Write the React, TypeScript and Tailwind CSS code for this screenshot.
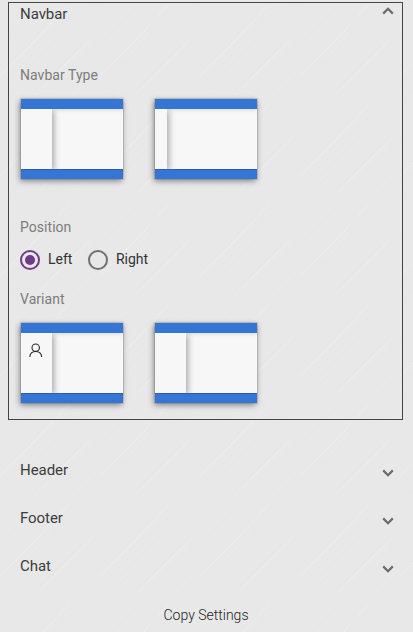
import React from "react";

const STREAKS = [
  { d: "M-7 83L32 43L70 3L32.5 44Z", color: "#f3f3f3", w: 0.5, o: 0.45 },
  { d: "M12 62L58 15", color: "#dddddd", w: 0.6, o: 0.35 },
  { d: "M33 97L64 65L95 35L64.5 66Z", color: "#f3f3f3", w: 0.5, o: 0.35 },
  { d: "M37 89L82 45", color: "#dedede", w: 0.6, o: 0.4 },
  { d: "M3 84L76 10", color: "#dedede", w: 0.6, o: 0.35 },
  { d: "M17 79L61 35", color: "#e1e1e1", w: 0.6, o: 0.6 },
  { d: "M52 94L96 50", color: "#dfdfdf", w: 0.6, o: 0.45 },
  { d: "M2 42L36 8", color: "#dfdfdf", w: 0.6, o: 0.4 },
  { d: "M70 32L98 3", color: "#e0e0e0", w: 0.6, o: 0.5 },
  { d: "M71 97L96 72", color: "#f0f0f0", w: 0.7, o: 0.3 },
  { d: "M5 98L30 74", color: "#e1e1e1", w: 0.6, o: 0.6 },
  { d: "M24 60L50 33", color: "#efefef", w: 0.7, o: 0.3 },
];

function Texture() {
  return (
    <svg className="absolute inset-0 -z-10 h-full w-full" aria-hidden="true">
      <defs>
        <pattern id="streaks" width="100" height="100" patternUnits="userSpaceOnUse">
          <rect width="100" height="100" fill="#e8e8e8" />
          {STREAKS.map((s) => (
            <path key={s.d} d={s.d} fill={s.color} stroke={s.color} strokeWidth={s.w} opacity={s.o} />
          ))}
        </pattern>
      </defs>
      <rect width="100%" height="100%" fill="url(#streaks)" />
    </svg>
  );
}

function Chevron({ up = false }: { up?: boolean }) {
  return (
    <svg width="12" height="8" viewBox="0 0 12 8" fill="none" stroke="#6c6c6c" strokeWidth="2.3">
      <path d={up ? "M1.2 6.6L6 1.8L10.8 6.6" : "M1.2 1.4L6 6.2L10.8 1.4"} />
    </svg>
  );
}

function LayoutCard({ mini = false, user = false }: { mini?: boolean; user?: boolean }) {
  return (
    <button className="flex h-20 w-[102px] flex-col bg-[#f7f7f7] shadow-[0_0_0_1px_rgba(0,0,0,0.1),-1px_2px_6px_rgba(0,0,0,0.45)]">
      <span className="z-10 h-2.5 w-full shrink-0 bg-[#3576d5] shadow-[0_1px_4px_rgba(0,0,0,0.12)]" />
      <span className="flex w-full flex-1">
        <span
          className={
            (mini ? "w-3" : "w-[31px]") +
            " relative z-20 flex justify-center bg-[#f7f7f7] pt-[10px] shadow-[2px_2px_6px_rgba(0,0,0,0.32)] [clip-path:inset(0_-12px_0_0)]"
          }
        >
          {user && (
            <svg className="-ml-0.5" width="14" height="15" viewBox="0 0 14 15" fill="none" stroke="#222" strokeWidth="1.1">
              <circle cx="6.7" cy="4.7" r="3.7" />
              <path d="M0.8 14C1 10.5 3.2 8.5 6.7 8.5S12.4 10.5 12.7 14" />
            </svg>
          )}
        </span>
      </span>
      <span className="z-30 h-2.5 w-full shrink-0 border-t border-[#2c5ea8] bg-[#3576d5]" />
    </button>
  );
}

function Radio({ label, checked = false }: { label: string; checked?: boolean }) {
  return (
    <label className="flex h-5 items-center gap-2">
      <span
        className={
          "flex size-5 items-center justify-center rounded-full border-2 " +
          (checked ? "border-[#6f3a87]" : "border-[#707070]")
        }
      >
        {checked && <span className="size-2.5 rounded-full bg-[#6f3a87]" />}
      </span>
      <span className="-mt-0.5 text-sm leading-5 text-[#333]">{label}</span>
    </label>
  );
}

function Caption({ children }: { children: React.ReactNode }) {
  return <div className="text-sm leading-5 tracking-[0.04px] text-[#7c7c7c]">{children}</div>;
}

function Section({ title }: { title: string }) {
  return (
    <div className="flex h-12 items-center justify-between pr-[19px] pl-5">
      <span className="text-[15px] leading-5 tracking-[-0.05px] text-[#3c3c3c]">{title}</span>
      <span className="pt-[5px]">
        <Chevron />
      </span>
    </div>
  );
}

export default function App() {
  return (
    <div className="relative isolate h-[632px] w-[413px] overflow-hidden pt-0.5 font-['Roboto',sans-serif] antialiased">
      <Texture />
      <section className="ml-2 h-[418px] w-[395px] border border-[#444] pl-[11px]">
        <div className="flex h-[22px] justify-between pr-[8px]">
          <span className="pt-px text-[15px] leading-5 tracking-[-0.05px] text-[#3c3c3c]">Navbar</span>
          <span className="pt-1">
            <Chevron up />
          </span>
        </div>
        <div className="mt-10">
          <Caption>Navbar Type</Caption>
        </div>
        <div className="mt-[14px] ml-px flex gap-8">
          <LayoutCard />
          <LayoutCard mini />
        </div>
        <div className="mt-[38px]">
          <Caption>Position</Caption>
        </div>
        <div className="mt-[13px] flex gap-[15.5px]">
          <Radio label="Left" checked />
          <Radio label="Right" />
        </div>
        <div className="mt-[19px]">
          <Caption>Variant</Caption>
        </div>
        <div className="mt-[14px] ml-px flex gap-8">
          <LayoutCard user />
          <LayoutCard />
        </div>
      </section>
      <div className="mt-[26px]">
        <Section title="Header" />
        <Section title="Footer" />
        <Section title="Chat" />
      </div>
      <div className="mt-[15px] pr-px text-center text-sm leading-5 font-light text-[#222]">
        Copy Settings
      </div>
    </div>
  );
}
